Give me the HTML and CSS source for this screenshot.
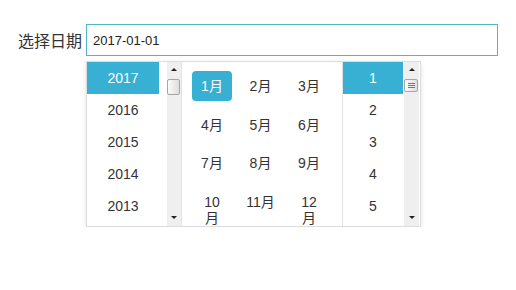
FILE: index.html
```html
<!DOCTYPE html>
<html>
<head>
  <meta name="viewport" content="width=device-width, initial-scale=1">
  <link rel="stylesheet" href="styles.css">
  <title>选择日期</title>
</head>
<body>

<div class="field">
  <label class="fieldLabel" for="date">选择日期</label>
  <input id="date" class="dateInput" type="text" value="2017-01-01">
</div>

<div class="picker">
  <ul class="list years">
    <li class="active">2017</li>
    <li>2016</li>
    <li>2015</li>
    <li>2014</li>
    <li>2013</li>
  </ul>
  <div class="scroll">
    <div class="arrow"><span class="up"></span></div>
    <div class="thumb tall"></div>
    <div class="track"></div>
    <div class="arrow"><span class="down"></span></div>
  </div>

  <div class="months">
    <span class="month active">1月</span>
    <span class="month">2月</span>
    <span class="month">3月</span>
    <span class="month">4月</span>
    <span class="month">5月</span>
    <span class="month">6月</span>
    <span class="month">7月</span>
    <span class="month">8月</span>
    <span class="month">9月</span>
    <span class="month">10<br>月</span>
    <span class="month">11月</span>
    <span class="month">12<br>月</span>
  </div>

  <ul class="list days">
    <li class="active">1</li>
    <li>2</li>
    <li>3</li>
    <li>4</li>
    <li>5</li>
  </ul>
  <div class="scroll">
    <div class="arrow"><span class="up"></span></div>
    <div class="thumb grip"><i></i><i></i><i></i></div>
    <div class="track"></div>
    <div class="arrow"><span class="down"></span></div>
  </div>
</div>

</body>
</html>
```

FILE: styles.css
```css
html, body {
  margin: 0;
  background-color: #ffffff;
  color: #333333;
  font-family: "Liberation Sans", "Noto Sans CJK SC", sans-serif;
}

.field {
  display: flex;
  align-items: center;
  padding: 24px 0 0 18px;
}

.fieldLabel {
  width: 68px;
  font-size: 16px;
  color: #333333;
}

.dateInput {
  box-sizing: border-box;
  width: 412px;
  height: 32px;
  margin: 0;
  padding: 0 0 0 6px;
  border: 1px solid #4db7c6;
  outline: none;
  font-family: "Liberation Sans", sans-serif;
  font-size: 13px;
  color: #222222;
}

.picker {
  box-sizing: border-box;
  display: flex;
  width: 335px;
  height: 166px;
  margin: 5px 0 0 86px;
  border: 1px solid #dddddd;
  box-shadow: 0 2px 5px rgba(0, 0, 0, 0.12);
  overflow: hidden;
  background-color: #ffffff;
}

.list {
  margin: 0;
  padding: 0;
  list-style: none;
  font-size: 14px;
}

.list li {
  height: 32px;
  line-height: 32px;
  text-align: center;
}

.list .active {
  background-color: #38b0d3;
  color: #ffffff;
}

.years {
  width: 80px;
}

.years li {
  width: 72px;
}

.days {
  width: 61px;
  border-left: 1px solid #e3e3e3;
}

.days li {
  width: 60px;
}

.scroll {
  display: flex;
  flex-direction: column;
  width: 14px;
  padding-bottom: 2px;
  background-color: #efefef;
}

.scroll:last-child {
  width: 15px;
}

.arrow {
  display: flex;
  align-items: center;
  justify-content: center;
  height: 14px;
}

.up, .down {
  width: 0;
  height: 0;
  border-left: 3px solid transparent;
  border-right: 3px solid transparent;
}

.up {
  border-bottom: 3px solid #222222;
}

.down {
  border-top: 3px solid #222222;
}

.thumb {
  box-sizing: border-box;
  height: 13px;
  margin: 3px 1px 0 0;
  border: 1px solid #a6a6a6;
  border-radius: 2px;
  background: linear-gradient(to right, #fbfbfb, #dedede);
}

.thumb.tall {
  height: 16px;
}

.grip {
  display: flex;
  flex-direction: column;
  align-items: center;
  justify-content: center;
  gap: 1px;
}

.grip i {
  width: 7px;
  height: 1px;
  background-color: #777777;
}

.track {
  flex: 1;
}

.months {
  box-sizing: border-box;
  width: 161px;
  border-left: 1px solid #e3e3e3;
  padding: 9px 0 0 10px;
  display: grid;
  grid-template-columns: 40px 40px 40px;
  grid-auto-rows: 30px;
  column-gap: 8.5px;
  row-gap: 8.5px;
  align-content: start;
  font-size: 14px;
}

.month {
  padding-top: 7px;
  line-height: 16px;
  text-align: center;
  white-space: nowrap;
  border-radius: 4px;
}

.month.active {
  background-color: #38b0d3;
  color: #ffffff;
}
```
